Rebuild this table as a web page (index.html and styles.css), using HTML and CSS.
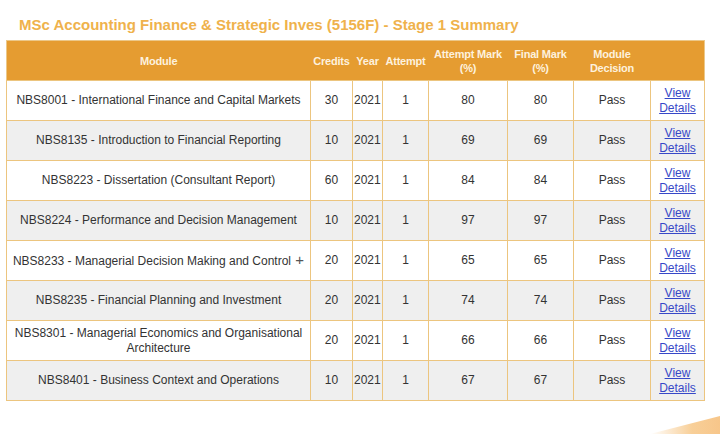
FILE: index.html
```html
<!DOCTYPE html>
<html>
<head>
<meta charset="utf-8">
<link rel="stylesheet" href="styles.css">
</head>
<body>
<div class="page">
  <h1 class="title">MSc Accounting Finance &amp; Strategic Inves (5156F) - Stage 1 Summary</h1>
  <table class="summary">
    <colgroup>
      <col class="c-mod"><col class="c-cred"><col class="c-year"><col class="c-att"><col class="c-am"><col class="c-fm"><col class="c-dec"><col class="c-view">
    </colgroup>
    <thead>
      <tr>
        <th>Module</th><th>Credits</th><th>Year</th><th>Attempt</th><th>Attempt Mark<br>(%)</th><th>Final Mark<br>(%)</th><th>Module<br>Decision</th><th></th>
      </tr>
    </thead>
    <tbody>
      <tr><td>NBS8001 - International Finance and Capital Markets</td><td>30</td><td class="yr">2021</td><td>1</td><td>80</td><td>80</td><td>Pass</td><td><a href="#">View<br>Details</a></td></tr>
      <tr><td>NBS8135 - Introduction to Financial Reporting</td><td>10</td><td class="yr">2021</td><td>1</td><td>69</td><td>69</td><td>Pass</td><td><a href="#">View<br>Details</a></td></tr>
      <tr><td>NBS8223 - Dissertation (Consultant Report)</td><td>60</td><td class="yr">2021</td><td>1</td><td>84</td><td>84</td><td>Pass</td><td><a href="#">View<br>Details</a></td></tr>
      <tr><td>NBS8224 - Performance and Decision Management</td><td>10</td><td class="yr">2021</td><td>1</td><td>97</td><td>97</td><td>Pass</td><td><a href="#">View<br>Details</a></td></tr>
      <tr><td class="mod-plus">NBS8233 - Managerial Decision Making and Control <span class="cursor">+</span></td><td>20</td><td class="yr">2021</td><td>1</td><td>65</td><td>65</td><td>Pass</td><td><a href="#">View<br>Details</a></td></tr>
      <tr><td>NBS8235 - Financial Planning and Investment</td><td>20</td><td class="yr">2021</td><td>1</td><td>74</td><td>74</td><td>Pass</td><td><a href="#">View<br>Details</a></td></tr>
      <tr><td>NBS8301 - Managerial Economics and Organisational Architecture</td><td>20</td><td class="yr">2021</td><td>1</td><td>66</td><td>66</td><td>Pass</td><td><a href="#">View<br>Details</a></td></tr>
      <tr><td>NBS8401 - Business Context and Operations</td><td>10</td><td class="yr">2021</td><td>1</td><td>67</td><td>67</td><td>Pass</td><td><a href="#">View<br>Details</a></td></tr>
    </tbody>
  </table>
  <div class="wedge"></div>
</div>
</body>
</html>
```

FILE: styles.css
```css
html, body {
  margin: 0;
  padding: 0;
  background: #ffffff;
}
.page {
  position: relative;
  width: 720px;
  height: 434px;
  overflow: hidden;
  padding: 0 0 0 6px;
  box-sizing: border-box;
  font-family: "Liberation Sans", Arial, sans-serif;
}
.title {
  margin: 0;
  padding: 16px 0 0 13px;
  height: 40px;
  box-sizing: border-box;
  font-size: 15px;
  line-height: 18px;
  font-weight: bold;
  color: #efb24c;
  white-space: nowrap;
}
.summary {
  border-collapse: collapse;
  table-layout: fixed;
  width: 698px;
  border: 1px solid #ecc889;
}
.c-mod { width: 304px; }
.c-cred { width: 42px; }
.c-year { width: 30px; }
.c-att { width: 46px; }
.c-am { width: 79px; }
.c-fm { width: 66px; }
.c-dec { width: 77px; }
.c-view { width: 54px; }
.summary thead tr {
  height: 40px;
  background: #e59c31;
}
.summary th {
  color: #fdf1de;
  font-size: 11px;
  line-height: 14px;
  font-weight: bold;
  text-align: center;
  padding: 0;
  white-space: nowrap;
  border: none;
  letter-spacing: -0.2px;
}
.summary tbody tr {
  height: 40px;
}
.summary tbody tr:nth-child(odd) {
  background: #ffffff;
}
.summary tbody tr:nth-child(even) {
  background: #efefef;
}
.summary td {
  border: 1px solid #ecc57f;
  text-align: center;
  font-size: 12px;
  line-height: 15px;
  color: #333333;
  padding: 0 2px;
}
.summary td.yr {
  text-align: left;
  padding: 0 0 0 1px;
}
.summary td:first-child {
  padding: 0 2px;
}
.cursor {
  font-size: 15px;
  color: #555;
  margin-left: 1px;
}
.summary a {
  color: #3748c8;
  text-decoration: underline;
  font-size: 12px;
  line-height: 15px;
}
.wedge {
  position: absolute;
  right: 0;
  bottom: 0;
  width: 70px;
  height: 18px;
  background: linear-gradient(90deg, rgba(248,200,140,0) 0%, #f8cf98 60%, #f7c68a 100%);
  clip-path: polygon(0 100%, 100% 0, 100% 100%);
}
```
